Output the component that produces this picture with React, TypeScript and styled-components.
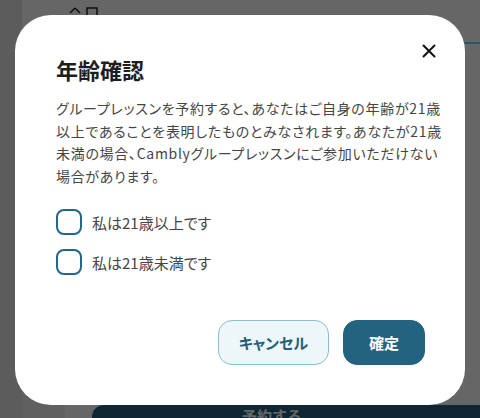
import React, { useState } from 'react'
import styled, { createGlobalStyle } from 'styled-components'

const GlobalStyle = createGlobalStyle`
  html, body {
    margin: 0;
    padding: 0;
  }
  body {
    font-family: "Noto Sans CJK JP", "Noto Sans", sans-serif;
    overflow: hidden;
  }
`

const Page = styled.div`
  display: grid;
  grid-template-columns: 22px 1fr;
  width: 100vw;
  height: 100vh;
  background: #ffffff;
`

const Sidebar = styled.div`
  background: #e6e6e6;
`

const Main = styled.div`
  display: flex;
  flex-direction: column;
`

const Header = styled.div`
  display: flex;
  align-items: flex-start;
  gap: 4px;
  height: 44px;
  padding: 7px 0 0 46px;
  box-sizing: border-box;
  border-bottom: 2px solid #74d6f5;
`

const Content = styled.div`
  flex: 1;
`

const Footer = styled.div`
  display: flex;
  height: 28px;
`

const FooterSide = styled.div`
  width: 43px;
  background: #f0f0f0;
`

const FooterGap = styled.div`
  width: 27px;
`

const BookButton = styled.div`
  flex: 1;
  margin-top: 15px;
  padding: 1px 0 0 150px;
  border-radius: 12px 0 0 0;
  background: #236380;
  color: #ffffff;
  font-size: 15px;
  line-height: 20px;
  font-weight: 700;
  overflow: hidden;
`

const Overlay = styled.div`
  position: fixed;
  inset: 0;
  display: flex;
  justify-content: center;
  align-items: flex-start;
  padding-top: 15px;
  background: rgba(0, 0, 0, 0.6);
`

const Dialog = styled.div`
  position: relative;
  width: 450px;
  box-sizing: border-box;
  padding: 39px 30px 40px 41px;
  border-radius: 36px;
  background: #ffffff;
`

const CloseButton = styled.button`
  position: absolute;
  top: 20px;
  right: 20px;
  width: 32px;
  height: 32px;
  display: flex;
  align-items: center;
  justify-content: center;
  padding: 0;
  border: none;
  background: transparent;
  cursor: pointer;
`

const Title = styled.h2`
  margin: 0;
  font-size: 22px;
  line-height: 30px;
  font-weight: 700;
  color: #1e1e1e;
  font-feature-settings: "palt";
`

const Body = styled.p`
  margin: 13px 0 0;
  font-size: 14px;
  line-height: 22.5px;
  letter-spacing: 0.7px;
  color: #454545;
  font-feature-settings: "palt";
  white-space: nowrap;
`

const Options = styled.div`
  display: flex;
  flex-direction: column;
  gap: 14px;
  margin-top: 22px;
`

const Option = styled.label`
  display: flex;
  align-items: center;
  gap: 10px;
  cursor: pointer;
  font-size: 15px;
  color: #454545;
  font-feature-settings: "palt";
`

const Box = styled.span<{ $checked: boolean }>`
  width: 26px;
  height: 26px;
  box-sizing: border-box;
  border: 2px solid #22668a;
  border-radius: 8px;
  background: ${(p) => (p.$checked ? '#22668a' : '#ffffff')};
`

const HiddenInput = styled.input`
  display: none;
`

const Actions = styled.div`
  display: flex;
  justify-content: flex-end;
  gap: 14px;
  margin-top: 45px;
  padding-right: 10px;
`

const Button = styled.button<{ $primary?: boolean }>`
  height: 45px;
  padding: 0 ${(p) => (p.$primary ? '25px' : '20px')};
  border-radius: 14px;
  border: 1px solid ${(p) => (p.$primary ? '#236380' : '#8dbbd1')};
  background: ${(p) => (p.$primary ? '#236380' : '#edf6f9')};
  color: ${(p) => (p.$primary ? '#ffffff' : '#235f7a')};
  font-family: "Noto Sans CJK JP", sans-serif;
  font-size: 15px;
  font-weight: 700;
  font-feature-settings: "palt";
  cursor: pointer;
`

const options = ['私は21歳以上です', '私は21歳未満です']

export default function App() {
  const [choice, setChoice] = useState<number | null>(null)

  return (
    <>
      <GlobalStyle />
      <Page>
        <Sidebar />
        <Main>
          <Header>
            <svg width="14" height="10" viewBox="0 0 14 10">
              <path d="M7 1 L12 6 M7 1 L2 6 M4 9 H10" stroke="#2a2a2a" strokeWidth="1.5" fill="none" />
            </svg>
            <svg width="12" height="10" viewBox="0 0 12 10">
              <rect x="1" y="1" width="10" height="9" stroke="#1c2a40" strokeWidth="1.5" fill="none" />
            </svg>
          </Header>
          <Content />
          <Footer>
            <FooterSide />
            <FooterGap />
            <BookButton>予約する</BookButton>
          </Footer>
        </Main>
      </Page>
      <Overlay>
        <Dialog>
          <CloseButton aria-label="閉じる">
            <svg width="14" height="14" viewBox="0 0 14 14">
              <path d="M1.5 1.5 L12.5 12.5 M12.5 1.5 L1.5 12.5" stroke="#111111" strokeWidth="2" strokeLinecap="round" />
            </svg>
          </CloseButton>
          <Title>年齢確認</Title>
          <Body>
            グループレッスンを予約すると、あなたはご自身の年齢が21歳
            <br />
            以上であることを表明したものとみなされます。あなたが21歳
            <br />
            未満の場合、Camblyグループレッスンにご参加いただけない
            <br />
            場合があります。
          </Body>
          <Options>
            {options.map((text, i) => (
              <Option key={text}>
                <HiddenInput type="checkbox" checked={choice === i} onChange={() => setChoice(choice === i ? null : i)} />
                <Box $checked={choice === i} />
                {text}
              </Option>
            ))}
          </Options>
          <Actions>
            <Button>キャンセル</Button>
            <Button $primary>確定</Button>
          </Actions>
        </Dialog>
      </Overlay>
    </>
  )
}
